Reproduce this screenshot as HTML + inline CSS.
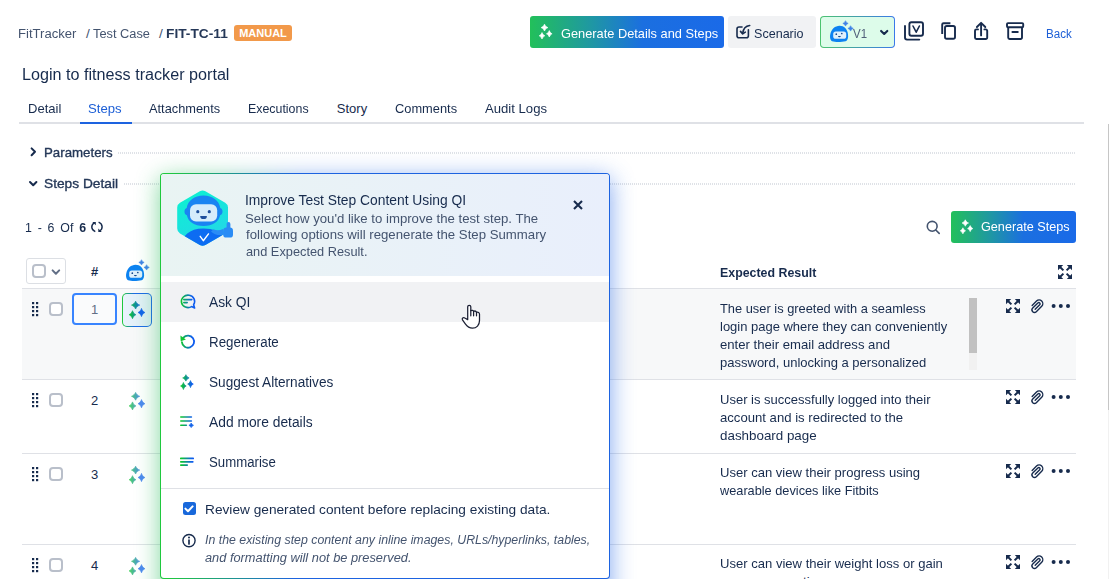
<!DOCTYPE html>
<html lang="en">
<head>
<meta charset="utf-8">
<title>FIT-TC-11 - Login to fitness tracker portal</title>
<style>
*{box-sizing:border-box;margin:0;padding:0}
html,body{width:1109px;height:579px;overflow:hidden;background:#fff}
body{font-family:"Liberation Sans",sans-serif;color:#172b4d;font-size:13px;position:relative}
.abs{position:absolute;white-space:nowrap}
.t{position:absolute;white-space:nowrap;line-height:16px;transform-origin:0 50%}
svg{position:absolute;overflow:visible}
.bc{top:25.6px;font-size:13.7px;color:#44546f}
.bc b{color:#253858}
.badge{left:234px;top:25px;width:58px;height:16px;background:#f2994a;border-radius:3px;color:#fff;font-weight:bold;font-size:11px;line-height:16px;text-align:center}
.btn{position:absolute;border-radius:3px;height:32px;top:16px}
.grad{background:linear-gradient(90deg,#22c05a 0%,#1f97a4 32%,#1b6fe0 58%,#1a6ae8 100%)}
.tab{top:101px;font-size:13px;color:#172b4d}
.hr{position:absolute;height:2px;background:#dfe1e6}
.dots{position:absolute;height:2px;background-image:linear-gradient(90deg,#dfe2e7 1px,transparent 1px);background-size:2px 2px}
.cb{position:absolute;width:14px;height:14px;border:2px solid #b9bfca;border-radius:4px;background:#fff}
.rowline{position:absolute;left:22px;width:1054px;height:1px;background:#dfe1e6}
.num{font-size:13px;color:#172b4d}
.er{font-size:13px;color:#172b4d;line-height:18px}
.opt{font-size:14px;color:#172b4d;left:209px}
.sec{font-size:13.5px;color:#253858;-webkit-text-stroke:.35px #253858}
</style>
</head>
<body>
<div class="t bc" id="bc1" style="transform:scaleX(0.9562);left:18.26px">FitTracker</div>
<div class="t bc" style="left:86px">/</div>
<div class="t bc" id="bc2" style="transform:scaleX(0.9354);left:93.02px">Test Case</div>
<div class="t bc" style="left:159px">/</div>
<div class="t bc" id="bc3" style="transform:scaleX(1.0033);left:165.60px"><b>FIT-TC-11</b></div>
<div class="abs badge">MANUAL</div>
<div class="btn grad" style="left:530px;width:194px"></div>
<div class="t" id="gd" style="transform:scaleX(0.9843);left:560.60px;top:25.6px;font-size:13px;color:#fff">Generate Details and Steps</div>
<div class="btn" style="left:728px;width:88px;background:#f1f2f4"></div>
<div class="t" id="sc" style="transform:scaleX(0.9663);left:754.21px;top:25.6px;font-size:13px;color:#172b4d">Scenario</div>
<div class="btn" style="left:820px;width:75px;border-radius:4px;background:linear-gradient(#ddfcea,#ddfcea) padding-box,linear-gradient(90deg,#4cc46f,#3b78ea) border-box;border:1px solid transparent"></div>
<div class="t" id="v1" style="transform:scaleX(0.9167);left:852.83px;top:25.6px;font-size:12.5px;color:#505f79">V1</div>
<div class="t" id="back" style="transform:scaleX(0.9270);left:1045.96px;top:25.6px;font-size:12.5px;color:#1d5fd6">Back</div>
<div class="t" id="title" style="transform:scaleX(1.0098);left:22.09px;top:65px;font-size:16px;line-height:20px;color:#172b4d">Login to fitness tracker portal</div>
<div class="t tab" id="t1" style="transform:scaleX(1.0031);left:28.10px">Detail</div>
<div class="t tab" id="t2" style="transform:scaleX(1.0096);left:87.99px;color:#1d5fd6">Steps</div>
<div class="t tab" id="t3" style="transform:scaleX(0.9846);left:149.00px">Attachments</div>
<div class="t tab" id="t4" style="transform:scaleX(0.9527);left:248.21px">Executions</div>
<div class="t tab" id="t5" style="transform:scaleX(1.0000);left:336.80px">Story</div>
<div class="t tab" id="t6" style="transform:scaleX(0.9872);left:394.90px">Comments</div>
<div class="t tab" id="t7" style="transform:scaleX(1.0098);left:484.70px">Audit Logs</div>
<div class="hr" style="left:19px;top:122px;width:1065px"></div>
<div class="hr" style="left:80px;top:122px;width:52px;background:#1d63e0"></div>
<div class="t sec" id="s1" style="transform:scaleX(0.9827);left:44.31px;top:144.7px">Parameters</div>
<div class="dots" style="left:118px;top:152px;width:957px"></div>
<div class="t sec" id="s2" style="transform:scaleX(1.0166);left:44.30px;top:175.6px">Steps Detail</div>
<div class="dots" style="left:124px;top:183px;width:951px"></div>
<div class="t" id="cnt" style="transform:scaleX(0.9511);left:24.85px;top:219.5px;font-size:13px;word-spacing:2.5px">1 - 6 Of <b>6</b></div>
<div class="btn grad" style="left:951px;top:211px;width:125px"></div>
<div class="t" id="gs" style="transform:scaleX(0.9723);left:981.41px;top:219px;font-size:13px;color:#fff">Generate Steps</div>
<div class="abs" style="left:26px;top:258px;width:40px;height:26px;border:1px solid #dcdfe4;border-radius:3px"></div>
<div class="cb" style="left:32px;top:264px"></div>
<div class="t" style="left:91px;top:264px;font-size:13px;font-weight:bold">#</div>
<div class="t" id="erh" style="transform:scaleX(0.9897);left:719.90px;top:265px;font-size:12.5px;font-weight:bold">Expected Result</div>
<div class="rowline" style="top:288px"></div>
<div class="abs" style="left:22px;top:289px;width:1054px;height:90px;background:#f7f8f9"></div>
<div class="rowline" style="top:379px"></div>
<div class="rowline" style="top:453px"></div>
<div class="rowline" style="top:544px"></div>
<div class="cb" style="left:49px;top:302px"></div>
<div class="abs" style="left:72px;top:293px;width:45px;height:32px;border:2px solid #3884ff;border-radius:4px;background:#fafbfc"></div>
<div class="t num" style="left:91px;top:302px;color:#626f86">1</div>
<div class="abs" style="left:122px;top:293px;width:30px;height:34px;border-radius:5px;background:linear-gradient(90deg,#eaf2fd,#dcedf2) padding-box,linear-gradient(90deg,#1fc83e 5%,#1d6ae5 40%) border-box;border:1.4px solid transparent"></div>
<div class="cb" style="left:49px;top:393px"></div>
<div class="t num" style="left:91px;top:393px">2</div>
<div class="cb" style="left:49px;top:467px"></div>
<div class="t num" style="left:91px;top:467px">3</div>
<div class="cb" style="left:49px;top:558px"></div>
<div class="t num" style="left:91px;top:557.7px">4</div>
<div class="t er" id="er1a" style="transform:scaleX(0.9884);left:720.10px;top:299.5px;">The user is greeted with a seamless</div>
<div class="t er" id="er1b" style="transform:scaleX(0.9982);left:719.90px;top:317.5px;">login page where they can conveniently</div>
<div class="t er" id="er1c" style="transform:scaleX(1.0096);left:719.90px;top:335.5px;">enter their email address and</div>
<div class="t er" id="er1d" style="transform:scaleX(1.0010);left:720.10px;top:353.5px;">password, unlocking a personalized</div>
<div class="abs" style="left:969px;top:298px;width:8px;height:72px;background:#f1f1f1"></div>
<div class="abs" style="left:969px;top:298px;width:8px;height:55px;background:#c1c1c1"></div>
<div class="t er" id="er2a" style="transform:scaleX(1.0010);left:720.10px;top:390.5px;">User is successfully logged into their</div>
<div class="t er" id="er2b" style="transform:scaleX(1.0094);left:719.90px;top:408.5px;">account and is redirected to the</div>
<div class="t er" id="er2c" style="transform:scaleX(1.0289);left:719.89px;top:426.5px;">dashboard page</div>
<div class="t er" id="er3a" style="transform:scaleX(1.0035);left:720.10px;top:464.0px;">User can view their progress using</div>
<div class="t er" id="er3b" style="transform:scaleX(0.9802);left:719.91px;top:482.0px;">wearable devices like Fitbits</div>
<div class="t er" id="er4a" style="transform:scaleX(1.0045);left:720.10px;top:554.7px;">User can view their weight loss or gain</div>
<div class="t er" id="er4b" style="left:720px;top:572.7px;">progress over time</div>
<div class="abs" style="left:1107.6px;top:124px;width:1.4px;height:455px;background:#f1f1f1"></div>
<div class="abs" style="left:1107.6px;top:124px;width:1.4px;height:286px;background:#c6c6c6"></div>
<svg width="1109" height="579" viewBox="0 0 1109 579" style="left:0;top:0;pointer-events:none" ><defs><linearGradient id="gb" x1="0" x2="1" y1="0" y2="0"><stop offset="0" stop-color="#12c23a"/><stop offset="1" stop-color="#1162ea"/></linearGradient><linearGradient id="gr" gradientUnits="userSpaceOnUse" x1="129" x2="140" y1="0" y2="0"><stop offset="0" stop-color="#0cc82a"/><stop offset="1" stop-color="#1468e0"/></linearGradient></defs><path d="M544.50,24.20C545.25,25.90 546.20,26.85 547.90,27.60C546.20,28.35 545.25,29.30 544.50,31.00C543.75,29.30 542.80,28.35 541.10,27.60C542.80,26.85 543.75,25.90 544.50,24.20ZM549.30,30.58C549.92,32.19 550.70,33.09 552.10,33.80C550.70,34.51 549.92,35.41 549.30,37.02C548.68,35.41 547.90,34.51 546.50,33.80C547.90,33.09 548.68,32.19 549.30,30.58ZM542.00,32.58C542.62,34.19 543.40,35.09 544.80,35.80C543.40,36.51 542.62,37.41 542.00,39.02C541.38,37.41 540.60,36.51 539.20,35.80C540.60,35.09 541.38,34.19 542.00,32.58Z" fill="#fff" stroke="#fff" stroke-width=".7" stroke-linejoin="round"/><path d="M965.30,219.80C966.00,221.40 966.90,222.30 968.50,223.00C966.90,223.70 966.00,224.60 965.30,226.20C964.60,224.60 963.70,223.70 962.10,223.00C963.70,222.30 964.60,221.40 965.30,219.80ZM970.20,225.61C970.77,227.10 971.50,227.94 972.80,228.60C971.50,229.26 970.77,230.09 970.20,231.59C969.63,230.09 968.90,229.26 967.60,228.60C968.90,227.94 969.63,227.10 970.20,225.61ZM962.90,227.81C963.47,229.31 964.20,230.14 965.50,230.80C964.20,231.46 963.47,232.30 962.90,233.79C962.33,232.30 961.60,231.46 960.30,230.80C961.60,230.14 962.33,229.31 962.90,227.81Z" fill="#fff" stroke="#fff" stroke-width=".7" stroke-linejoin="round"/><path d="M742,27H739a2,2 0 0 0 -2,2v6.8a2,2 0 0 0 2,2h7.4a2,2 0 0 0 2,-2v-6" fill="none" stroke="#172b4d" stroke-width="1.6" stroke-linecap="round"/><path d="M749.7,25.5c-3.8,0.5 -6.4,3.1 -7,7.6" fill="none" stroke="#172b4d" stroke-width="1.6" stroke-linecap="round"/><path d="M740.5,31.4l2.2,2.5l2.6,-1.7" fill="none" stroke="#172b4d" stroke-width="1.6" stroke-linecap="round" stroke-linejoin="round"/><g transform="translate(830,25.8) scale(1.0)"><path d="M2.0,15.5C0.2,14.6 -0.4,11 0.4,8C1.4,3.6 5,0 9.6,0C14,0 17.4,3.4 18,8.4C18.5,12 17.6,14.8 15.6,15.4C11.6,16.4 5.6,16.6 2.0,15.5Z" fill="#0c82f1"/><rect x="3.2" y="5.6" width="13" height="7.4" rx="2.6" fill="#dff0fb"/><circle cx="6.3" cy="8.4" r="0.85" fill="#1b4b8f"/><circle cx="11.8" cy="7.7" r="0.85" fill="#1b4b8f"/><path d="M8,10.2h2.8a1.4,1.2 0 0 1 -2.8,0Z" fill="#1b4b8f"/><path d="M15.50,-5.10C16.09,-3.75 16.85,-2.99 18.20,-2.40C16.85,-1.81 16.09,-1.05 15.50,0.30C14.91,-1.05 14.15,-1.81 12.80,-2.40C14.15,-2.99 14.91,-3.75 15.50,-5.10ZM20.60,-0.10C21.19,1.25 21.95,2.01 23.30,2.60C21.95,3.19 21.19,3.95 20.60,5.30C20.01,3.95 19.25,3.19 17.90,2.60C19.25,2.01 20.01,1.25 20.60,-0.10Z" fill="#3f82e6" stroke="#3f82e6" stroke-width=".5" stroke-linejoin="round"/></g><path d="M881.1,30.9l3.1,3.1l3.1,-3.1" fill="none" stroke="#172b4d" stroke-width="2.1" stroke-linecap="round" stroke-linejoin="round"/><rect x="909.4" y="22.2" width="13.6" height="13.6" rx="2" fill="none" stroke="#172b4d" stroke-width="1.9"/><path d="M905,26v11.6a2,2 0 0 0 2,2h12.3" fill="none" stroke="#172b4d" stroke-width="1.9" stroke-linecap="round"/><path d="M913,26l3.2,6.2l3.2,-6.2" fill="none" stroke="#172b4d" stroke-width="1.6" stroke-linecap="round" stroke-linejoin="round"/><rect x="945" y="26" width="10" height="12.8" rx="1.8" fill="none" stroke="#172b4d" stroke-width="1.9"/><path d="M950.4,23.2H943.6a1.4,1.4 0 0 0 -1.4,1.4V34" fill="none" stroke="#172b4d" stroke-width="1.9" stroke-linecap="butt"/><path d="M978,29.4h-1.6a1.4,1.4 0 0 0 -1.4,1.4v6.8a1.4,1.4 0 0 0 1.4,1.4h9.4a1.4,1.4 0 0 0 1.4,-1.4v-6.8a1.4,1.4 0 0 0 -1.4,-1.4H984.4" fill="none" stroke="#172b4d" stroke-width="1.9" stroke-linecap="round"/><path d="M981.1,35.4V23.2M976.9,27l4.2,-4.2l4.2,4.2" fill="none" stroke="#172b4d" stroke-width="1.9" stroke-linecap="round" stroke-linejoin="round"/><rect x="1007" y="23.1" width="16.2" height="4.2" rx="1" fill="none" stroke="#172b4d" stroke-width="1.9"/><path d="M1008.2,27.4v10.2a1.4,1.4 0 0 0 1.4,1.4h11a1.4,1.4 0 0 0 1.4,-1.4V27.4" fill="none" stroke="#172b4d" stroke-width="1.9"/><path d="M1012.4,32h5.4" stroke="#172b4d" stroke-width="1.9" stroke-linecap="round"/><path d="M31.6,148.4l3.4,3.4l-3.4,3.4" fill="none" stroke="#172b4d" stroke-width="2" stroke-linecap="round" stroke-linejoin="round"/><path d="M30,182l3.2,3.2l3.2,-3.2" fill="none" stroke="#172b4d" stroke-width="2" stroke-linecap="round" stroke-linejoin="round"/><g fill="none" stroke="#172b4d" stroke-width="1.45"><path d="M95.3,231.7c-4.6,-2 -4.4,-6.8 -1,-8.8"/><path d="M98.6,222.2c4.6,2 4.4,6.8 1,8.8"/></g><path d="M92.3,221.9h3.5v3.4Z M101.8,232h-3.5v-3.4Z" fill="#172b4d"/><circle cx="932.2" cy="226.3" r="4.9" fill="none" stroke="#44546f" stroke-width="1.6"/><path d="M935.8,230l3.4,3.4" stroke="#44546f" stroke-width="1.6" stroke-linecap="round"/><path d="M52.6,270.4l3.3,3.3l3.3,-3.3" fill="none" stroke="#626f86" stroke-width="2" stroke-linecap="round" stroke-linejoin="round"/><g transform="translate(126,264.8) scale(1.0)"><path d="M2.0,15.5C0.2,14.6 -0.4,11 0.4,8C1.4,3.6 5,0 9.6,0C14,0 17.4,3.4 18,8.4C18.5,12 17.6,14.8 15.6,15.4C11.6,16.4 5.6,16.6 2.0,15.5Z" fill="#0c82f1"/><rect x="3.2" y="5.6" width="13" height="7.4" rx="2.6" fill="#dff0fb"/><circle cx="6.3" cy="8.4" r="0.85" fill="#1b4b8f"/><circle cx="11.8" cy="7.7" r="0.85" fill="#1b4b8f"/><path d="M8,10.2h2.8a1.4,1.2 0 0 1 -2.8,0Z" fill="#1b4b8f"/><path d="M15.50,-5.10C16.09,-3.75 16.85,-2.99 18.20,-2.40C16.85,-1.81 16.09,-1.05 15.50,0.30C14.91,-1.05 14.15,-1.81 12.80,-2.40C14.15,-2.99 14.91,-3.75 15.50,-5.10ZM20.60,-0.10C21.19,1.25 21.95,2.01 23.30,2.60C21.95,3.19 21.19,3.95 20.60,5.30C20.01,3.95 19.25,3.19 17.90,2.60C19.25,2.01 20.01,1.25 20.60,-0.10Z" fill="#3f82e6" stroke="#3f82e6" stroke-width=".5" stroke-linejoin="round"/></g><path d="M1058,265h5.2l-5.2,5.2Z M1072,265v5.2l-5.2,-5.2Z M1058,279v-5.2l5.2,5.2Z M1072,279h-5.2l5.2,-5.2Z" fill="#172b4d"/><path d="M1060,267L1063.4,270.4 M1070,267L1066.6,270.4 M1060,277L1063.4,273.6 M1070,277L1066.6,273.6" stroke="#172b4d" stroke-width="2" fill="none"/><path d="M1006,299h5.2l-5.2,5.2Z M1020,299v5.2l-5.2,-5.2Z M1006,313v-5.2l5.2,5.2Z M1020,313h-5.2l5.2,-5.2Z" fill="#172b4d"/><path d="M1008,301L1011.4,304.4 M1018,301L1014.6,304.4 M1008,311L1011.4,307.6 M1018,311L1014.6,307.6" stroke="#172b4d" stroke-width="2" fill="none"/><g transform="translate(1036.9,305.9) rotate(45) scale(0.87)" fill="none" stroke="#172b4d" stroke-width="1.6" stroke-linecap="round"><path d="M-4.2,3.5V-3.6a4.2,4.2 0 0 1 8.4,0V5.2a2.9,2.9 0 0 1 -5.8,0V-3.2a1.5,1.5 0 0 1 3,0V4.2"/></g><circle cx="1053.6" cy="306" r="2" fill="#172b4d"/><circle cx="1060.8" cy="306" r="2" fill="#172b4d"/><circle cx="1068" cy="306" r="2" fill="#172b4d"/><path d="M1006,390h5.2l-5.2,5.2Z M1020,390v5.2l-5.2,-5.2Z M1006,404v-5.2l5.2,5.2Z M1020,404h-5.2l5.2,-5.2Z" fill="#172b4d"/><path d="M1008,392L1011.4,395.4 M1018,392L1014.6,395.4 M1008,402L1011.4,398.6 M1018,402L1014.6,398.6" stroke="#172b4d" stroke-width="2" fill="none"/><g transform="translate(1036.9,396.9) rotate(45) scale(0.87)" fill="none" stroke="#172b4d" stroke-width="1.6" stroke-linecap="round"><path d="M-4.2,3.5V-3.6a4.2,4.2 0 0 1 8.4,0V5.2a2.9,2.9 0 0 1 -5.8,0V-3.2a1.5,1.5 0 0 1 3,0V4.2"/></g><circle cx="1053.6" cy="397" r="2" fill="#172b4d"/><circle cx="1060.8" cy="397" r="2" fill="#172b4d"/><circle cx="1068" cy="397" r="2" fill="#172b4d"/><path d="M1006,464h5.2l-5.2,5.2Z M1020,464v5.2l-5.2,-5.2Z M1006,478v-5.2l5.2,5.2Z M1020,478h-5.2l5.2,-5.2Z" fill="#172b4d"/><path d="M1008,466L1011.4,469.4 M1018,466L1014.6,469.4 M1008,476L1011.4,472.6 M1018,476L1014.6,472.6" stroke="#172b4d" stroke-width="2" fill="none"/><g transform="translate(1036.9,470.9) rotate(45) scale(0.87)" fill="none" stroke="#172b4d" stroke-width="1.6" stroke-linecap="round"><path d="M-4.2,3.5V-3.6a4.2,4.2 0 0 1 8.4,0V5.2a2.9,2.9 0 0 1 -5.8,0V-3.2a1.5,1.5 0 0 1 3,0V4.2"/></g><circle cx="1053.6" cy="471" r="2" fill="#172b4d"/><circle cx="1060.8" cy="471" r="2" fill="#172b4d"/><circle cx="1068" cy="471" r="2" fill="#172b4d"/><path d="M1006,555h5.2l-5.2,5.2Z M1020,555v5.2l-5.2,-5.2Z M1006,569v-5.2l5.2,5.2Z M1020,569h-5.2l5.2,-5.2Z" fill="#172b4d"/><path d="M1008,557L1011.4,560.4 M1018,557L1014.6,560.4 M1008,567L1011.4,563.6 M1018,567L1014.6,563.6" stroke="#172b4d" stroke-width="2" fill="none"/><g transform="translate(1036.9,561.9) rotate(45) scale(0.87)" fill="none" stroke="#172b4d" stroke-width="1.6" stroke-linecap="round"><path d="M-4.2,3.5V-3.6a4.2,4.2 0 0 1 8.4,0V5.2a2.9,2.9 0 0 1 -5.8,0V-3.2a1.5,1.5 0 0 1 3,0V4.2"/></g><circle cx="1053.6" cy="562" r="2" fill="#172b4d"/><circle cx="1060.8" cy="562" r="2" fill="#172b4d"/><circle cx="1068" cy="562" r="2" fill="#172b4d"/><rect x="32" y="302" width="2.2" height="2.2" fill="#172b4d"/><rect x="32" y="306" width="2.2" height="2.2" fill="#172b4d"/><rect x="32" y="310" width="2.2" height="2.2" fill="#172b4d"/><rect x="32" y="314" width="2.2" height="2.2" fill="#172b4d"/><rect x="36" y="302" width="2.2" height="2.2" fill="#172b4d"/><rect x="36" y="306" width="2.2" height="2.2" fill="#172b4d"/><rect x="36" y="310" width="2.2" height="2.2" fill="#172b4d"/><rect x="36" y="314" width="2.2" height="2.2" fill="#172b4d"/><rect x="32" y="393" width="2.2" height="2.2" fill="#172b4d"/><rect x="32" y="397" width="2.2" height="2.2" fill="#172b4d"/><rect x="32" y="401" width="2.2" height="2.2" fill="#172b4d"/><rect x="32" y="405" width="2.2" height="2.2" fill="#172b4d"/><rect x="36" y="393" width="2.2" height="2.2" fill="#172b4d"/><rect x="36" y="397" width="2.2" height="2.2" fill="#172b4d"/><rect x="36" y="401" width="2.2" height="2.2" fill="#172b4d"/><rect x="36" y="405" width="2.2" height="2.2" fill="#172b4d"/><rect x="32" y="467" width="2.2" height="2.2" fill="#172b4d"/><rect x="32" y="471" width="2.2" height="2.2" fill="#172b4d"/><rect x="32" y="475" width="2.2" height="2.2" fill="#172b4d"/><rect x="32" y="479" width="2.2" height="2.2" fill="#172b4d"/><rect x="36" y="467" width="2.2" height="2.2" fill="#172b4d"/><rect x="36" y="471" width="2.2" height="2.2" fill="#172b4d"/><rect x="36" y="475" width="2.2" height="2.2" fill="#172b4d"/><rect x="36" y="479" width="2.2" height="2.2" fill="#172b4d"/><rect x="32" y="558" width="2.2" height="2.2" fill="#172b4d"/><rect x="32" y="562" width="2.2" height="2.2" fill="#172b4d"/><rect x="32" y="566" width="2.2" height="2.2" fill="#172b4d"/><rect x="32" y="570" width="2.2" height="2.2" fill="#172b4d"/><rect x="36" y="558" width="2.2" height="2.2" fill="#172b4d"/><rect x="36" y="562" width="2.2" height="2.2" fill="#172b4d"/><rect x="36" y="566" width="2.2" height="2.2" fill="#172b4d"/><rect x="36" y="570" width="2.2" height="2.2" fill="#172b4d"/><g opacity="1"><g stroke-width=".7" stroke-linejoin="round"><path d="M135.60,301.20C136.50,303.15 137.65,304.24 139.70,305.10C137.65,305.96 136.50,307.05 135.60,309.00C134.70,307.05 133.55,305.96 131.50,305.10C133.55,304.24 134.70,303.15 135.60,301.20Z" fill="url(#gr)" stroke="url(#gr)"/><path d="M141.50,308.40C142.25,310.45 143.20,311.60 144.90,312.50C143.20,313.40 142.25,314.55 141.50,316.60C140.75,314.55 139.80,313.40 138.10,312.50C139.80,311.60 140.75,310.45 141.50,308.40Z" fill="#1162ea" stroke="#1162ea"/><path d="M132.50,310.70C133.25,312.70 134.20,313.82 135.90,314.70C134.20,315.58 133.25,316.70 132.50,318.70C131.75,316.70 130.80,315.58 129.10,314.70C130.80,313.82 131.75,312.70 132.50,310.70Z" fill="url(#gr)" stroke="url(#gr)"/></g></g><g opacity="0.75"><g stroke-width=".7" stroke-linejoin="round"><path d="M135.60,392.40C136.50,394.35 137.65,395.44 139.70,396.30C137.65,397.16 136.50,398.25 135.60,400.20C134.70,398.25 133.55,397.16 131.50,396.30C133.55,395.44 134.70,394.35 135.60,392.40Z" fill="url(#gr)" stroke="url(#gr)"/><path d="M141.50,399.60C142.25,401.65 143.20,402.80 144.90,403.70C143.20,404.60 142.25,405.75 141.50,407.80C140.75,405.75 139.80,404.60 138.10,403.70C139.80,402.80 140.75,401.65 141.50,399.60Z" fill="#1162ea" stroke="#1162ea"/><path d="M132.50,401.90C133.25,403.90 134.20,405.02 135.90,405.90C134.20,406.78 133.25,407.90 132.50,409.90C131.75,407.90 130.80,406.78 129.10,405.90C130.80,405.02 131.75,403.90 132.50,401.90Z" fill="url(#gr)" stroke="url(#gr)"/></g></g><g opacity="0.75"><g stroke-width=".7" stroke-linejoin="round"><path d="M135.60,466.20C136.50,468.15 137.65,469.24 139.70,470.10C137.65,470.96 136.50,472.05 135.60,474.00C134.70,472.05 133.55,470.96 131.50,470.10C133.55,469.24 134.70,468.15 135.60,466.20Z" fill="url(#gr)" stroke="url(#gr)"/><path d="M141.50,473.40C142.25,475.45 143.20,476.60 144.90,477.50C143.20,478.40 142.25,479.55 141.50,481.60C140.75,479.55 139.80,478.40 138.10,477.50C139.80,476.60 140.75,475.45 141.50,473.40Z" fill="#1162ea" stroke="#1162ea"/><path d="M132.50,475.70C133.25,477.70 134.20,478.82 135.90,479.70C134.20,480.58 133.25,481.70 132.50,483.70C131.75,481.70 130.80,480.58 129.10,479.70C130.80,478.82 131.75,477.70 132.50,475.70Z" fill="url(#gr)" stroke="url(#gr)"/></g></g><g opacity="0.75"><g stroke-width=".7" stroke-linejoin="round"><path d="M135.60,557.40C136.50,559.35 137.65,560.44 139.70,561.30C137.65,562.16 136.50,563.25 135.60,565.20C134.70,563.25 133.55,562.16 131.50,561.30C133.55,560.44 134.70,559.35 135.60,557.40Z" fill="url(#gr)" stroke="url(#gr)"/><path d="M141.50,564.60C142.25,566.65 143.20,567.80 144.90,568.70C143.20,569.60 142.25,570.75 141.50,572.80C140.75,570.75 139.80,569.60 138.10,568.70C139.80,567.80 140.75,566.65 141.50,564.60Z" fill="#1162ea" stroke="#1162ea"/><path d="M132.50,566.90C133.25,568.90 134.20,570.02 135.90,570.90C134.20,571.78 133.25,572.90 132.50,574.90C131.75,572.90 130.80,571.78 129.10,570.90C130.80,570.02 131.75,568.90 132.50,566.90Z" fill="url(#gr)" stroke="url(#gr)"/></g></g></svg>
<div class="abs" style="left:160px;top:178px;width:450px;height:430px;background:linear-gradient(90deg,#2fbf62 0%,#2fbf62 10%,#2f6fe6 32%);filter:blur(12px);opacity:.62"></div>
<div class="abs" id="pop" style="left:160px;top:173px;width:450px;height:406px;border-radius:4px;background:linear-gradient(#fff,#fff) padding-box,linear-gradient(90deg,#1fc83e 2%,#1d63e0 30%) border-box;border:1px solid transparent"></div>
<div class="abs" style="left:161px;top:174px;width:448px;height:102px;border-radius:3px 3px 0 0;background:linear-gradient(90deg,#e9f4f3,#e9effc)"></div>
<div class="t" id="pt" style="transform:scaleX(0.9878);left:244.52px;top:192px;font-size:14px;color:#172b4d">Improve Test Step Content Using QI</div>
<div class="t " id="pda" style="transform:scaleX(1.0139);left:244.79px;top:210.8px;font-size:13px;line-height:16px;color:#44546f">Select how you'd like to improve the test step. The</div>
<div class="t " id="pdb" style="transform:scaleX(1.0156);left:245.80px;top:227.4px;font-size:13px;line-height:16px;color:#44546f">following options will regenerate the Step Summary</div>
<div class="t " id="pdc" style="transform:scaleX(0.9828);left:245.80px;top:244.0px;font-size:13px;line-height:16px;color:#44546f">and Expected Result.</div>
<div class="abs" style="left:161px;top:282px;width:448px;height:40px;background:#f1f2f4"></div>
<div class="t opt" id="o1" style="transform:scaleX(0.9851);left:209.10px;top:294px">Ask QI</div>
<div class="t opt" id="o2" style="transform:scaleX(0.9538);left:208.86px;top:334px">Regenerate</div>
<div class="t opt" id="o3" style="transform:scaleX(0.9741);left:209.11px;top:374px">Suggest Alternatives</div>
<div class="t opt" id="o4" style="transform:scaleX(0.9866);left:209.10px;top:414px">Add more details</div>
<div class="t opt" id="o5" style="transform:scaleX(0.9432);left:209.12px;top:454px">Summarise</div>
<div class="abs" style="left:161px;top:488px;width:448px;height:1px;background:#dfe1e6"></div>
<div class="abs" style="left:182.5px;top:502px;width:13px;height:13px;border-radius:2.5px;background:#1868db"></div>
<div class="t" id="rv" style="transform:scaleX(1.0138);left:205.20px;top:501.5px;font-size:13.5px;color:#172b4d">Review generated content before replacing existing data.</div>
<div class="t " id="ita" style="transform:scaleX(0.9864);left:205.20px;top:532.2px;font-size:12.5px;line-height:16px;font-style:italic;color:#44546f">In the existing step content any inline images, URLs/hyperlinks, tables,</div>
<div class="t " id="itb" style="transform:scaleX(1.0246);left:205.19px;top:550.2px;font-size:12.5px;line-height:16px;font-style:italic;color:#44546f">and formatting will not be preserved.</div>
<svg width="1109" height="579" viewBox="0 0 1109 579" style="left:0;top:0;pointer-events:none" ><defs><linearGradient id="g1" gradientUnits="userSpaceOnUse" x1="181" x2="192" y1="0" y2="0"><stop offset="0" stop-color="#0cc82a"/><stop offset="1" stop-color="#0e5cf0"/></linearGradient><linearGradient id="hx" gradientUnits="userSpaceOnUse" x1="185" y1="190" x2="215" y2="247"><stop offset="0" stop-color="#0cf2d0"/><stop offset="1" stop-color="#26d4ea"/></linearGradient><clipPath id="hc"><path d="M199.8,191.3a5.6,5.6 0 0 1 5.6,0l19.8,11.4a5.6,5.6 0 0 1 2.8,4.9v21a5.6,5.6 0 0 1 -2.8,4.9l-19.8,11.4a5.6,5.6 0 0 1 -5.6,0l-19.8,-11.4a5.6,5.6 0 0 1 -2.8,-4.9v-21a5.6,5.6 0 0 1 2.8,-4.9Z"/></clipPath></defs><path d="M199.8,191.3a5.6,5.6 0 0 1 5.6,0l19.8,11.4a5.6,5.6 0 0 1 2.8,4.9v21a5.6,5.6 0 0 1 -2.8,4.9l-19.8,11.4a5.6,5.6 0 0 1 -5.6,0l-19.8,-11.4a5.6,5.6 0 0 1 -2.8,-4.9v-21a5.6,5.6 0 0 1 2.8,-4.9Z" fill="url(#hx)"/><g clip-path="url(#hc)"><path d="M180,250c1,-12 7,-21.6 23.5,-21.6c10,0 15,3 19,7l10,-3v18Z" fill="#0d6cf2"/></g><path d="M203.5,195.6c9,0 15.6,5 16.8,12.4c1.4,0.4 2.2,1.6 2.2,3.4c0,2 -0.9,3.4 -2.4,3.8c-1.2,6.6 -7.4,10.8 -16.6,10.8s-15.4,-4.2 -16.6,-10.8c-1.5,-0.4 -2.4,-1.8 -2.4,-3.8c0,-1.8 0.8,-3 2.2,-3.4c1.2,-7.4 7.8,-12.4 16.8,-12.4Z" fill="#1a84f2"/><rect x="190" y="204.2" width="27.2" height="17.4" rx="6" fill="#d6ecfb"/><circle cx="197.8" cy="211.7" r="1.6" fill="#1e4f9c"/><circle cx="209.3" cy="211.7" r="1.6" fill="#1e4f9c"/><path d="M200.2,215.9h6.7a3.35,3.2 0 0 1 -6.7,0Z" fill="#1e4f9c"/><path d="M200.2,236.3l3.1,4.4l5.2,-6.8" fill="none" stroke="#fff" stroke-width="1.4" stroke-linecap="round" stroke-linejoin="round"/><path d="M211,231.4c3,3 8,4.6 13,3.2l-0.8,-5.6c-4,1.6 -7.4,1.4 -9.6,0.2Z" fill="#2a8cf5"/><rect x="223.2" y="227.6" width="9.8" height="10" rx="3.2" fill="#2a8cf5"/><path d="M226.6,229v-5a1.9,1.9 0 0 1 3.8,0v5Z" fill="#2a8cf5"/><path d="M574,201l8,8M582,201l-8,8" stroke="#172b4d" stroke-width="2.1" stroke-linecap="butt"/><g fill="none" stroke="url(#g1)" stroke-width="1.6" stroke-linecap="round"><path d="M191.6,306.6a6.6,6.2 0 1 1 2,-1.9l1,3.2Z" stroke-linejoin="round"/><path d="M183.8,299.6h8M183.8,302.6h3.4"/></g><path d="M183.4,337.6a6.1,6.1 0 1 1 -1.5,4.6" fill="none" stroke="url(#g1)" stroke-width="1.8" stroke-linecap="round"/><path d="M180.4,335.6l0.3,5.6l5.2,-1.6Z" fill="#12c432"/><path d="M185.90,374.70C186.60,376.30 187.50,377.20 189.10,377.90C187.50,378.60 186.60,379.50 185.90,381.10C185.20,379.50 184.30,378.60 182.70,377.90C184.30,377.20 185.20,376.30 185.90,374.70ZM190.50,380.60C191.12,382.35 191.90,383.33 193.30,384.10C191.90,384.87 191.12,385.85 190.50,387.60C189.88,385.85 189.10,384.87 187.70,384.10C189.10,383.33 189.88,382.35 190.50,380.60ZM183.40,382.50C184.02,384.25 184.80,385.23 186.20,386.00C184.80,386.77 184.02,387.75 183.40,389.50C182.78,387.75 182.00,386.77 180.60,386.00C182.00,385.23 182.78,384.25 183.40,382.50Z" fill="url(#g1)" stroke="url(#g1)" stroke-width=".7" stroke-linejoin="round"/><g stroke="url(#g1)" stroke-width="1.6" stroke-linecap="round"><path d="M180.8,417.01h10.6M180.8,421.01h10.6M180.8,425.31h5.6"/></g><path d="M191.20,423.00C191.71,424.15 192.35,424.79 193.50,425.30C192.35,425.81 191.71,426.45 191.20,427.60C190.69,426.45 190.05,425.81 188.90,425.30C190.05,424.79 190.69,424.15 191.20,423.00Z" fill="#1162ea" stroke="#1162ea" stroke-width=".7" stroke-linejoin="round"/><g stroke="url(#g1)" stroke-width="1.7" stroke-linecap="round"><path d="M180.8,458.41h12.4M180.8,461.81h12M180.8,465.11h6.4"/></g><path d="M185.4,508.6l2.6,2.6l4.6,-4.8" fill="none" stroke="#fff" stroke-width="2" stroke-linecap="round" stroke-linejoin="round"/><circle cx="189" cy="540.6" r="6.1" fill="none" stroke="#172b4d" stroke-width="1.4"/><circle cx="189" cy="537.5" r="1" fill="#172b4d"/><path d="M189,540v4" stroke="#172b4d" stroke-width="1.7" stroke-linecap="round"/><g stroke="#1b1f33" stroke-width="1.25" stroke-linejoin="round" stroke-linecap="round"><path d="M467.7,319.6V306.8a1.55,1.55 0 0 1 3.1,0V310.7c1.2,-0.6 2.4,-0.2 2.8,0.6c1.2,-0.5 2.5,0 2.9,0.9c1.6,-0.4 3,0.5 3,2.1V320.5c0,4.6 -2.9,7.7 -7,7.7c-3.2,0 -5.2,-1.5 -7.2,-4.3l-2.8,-4c-0.9,-1.4 0.7,-2.9 2.3,-1.9Z" fill="#fff"/><path d="M470.8,310.7V315.8M473.6,311.4V315.8M476.5,312.3V315.8" fill="none"/></g></svg></body>
</html>
